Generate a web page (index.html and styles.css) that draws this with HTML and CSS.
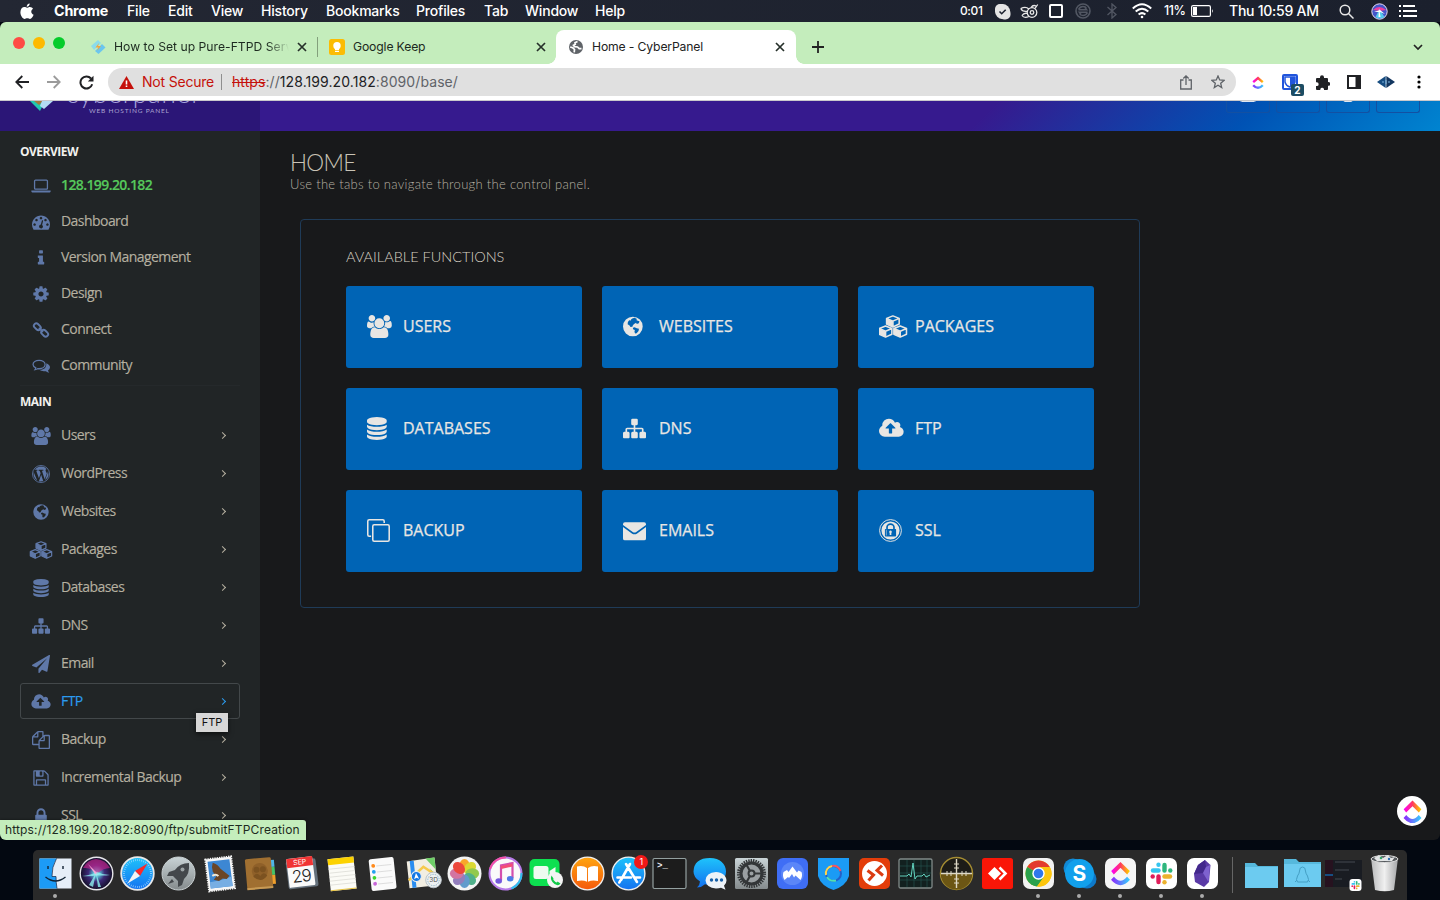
FILE: index.html
```html
<!DOCTYPE html>
<html lang="en">
<head>
<meta charset="utf-8">
<title>Home - CyberPanel</title>
<link rel="stylesheet" href="styles.css">
</head>
<body>
<svg class="defs" width="0" height="0">
<defs>
<path id="laptop" d="M416 1280q-66 0-113-47t-47-113v-704q0-66 47-113t113-47h1088q66 0 113 47t47 113v704q0 66-47 113t-113 47h-1088zm-32-864v704q0 13 9.500 22.500t22.500 9.500h1088q13 0 22.500-9.500t9.500-22.500v-704q0-13-9.500-22.500t-22.500-9.500h-1088q-13 0-22.500 9.500t-9.500 22.500zm1376 928h160v96q0 40-47 68t-113 28h-1600q-66 0-113-28t-47-68v-96h1760z"/>
<path id="gauge" d="M384 1152q0-53-37.500-90.500t-90.500-37.500-90.500 37.500-37.500 90.500 37.500 90.500 90.500 37.500 90.500-37.500 37.500-90.500zm192-448q0-53-37.500-90.500t-90.500-37.500-90.500 37.500-37.500 90.500 37.500 90.500 90.500 37.500 90.500-37.500 37.500-90.500zm428 481l101-382q6-26-7.500-48.500t-38.500-29.500-48 6.500-30 39.500l-101 382q-60 5-107 43.500t-63 98.500q-20 77 20 146t117 89 146-20 89-117q16-60-6-117t-72-91zm660-33q0-53-37.500-90.500t-90.500-37.500-90.500 37.500-37.500 90.500 37.500 90.500 90.500 37.500 90.500-37.500 37.500-90.500zm-640-640q0-53-37.500-90.500t-90.500-37.500-90.500 37.500-37.500 90.500 37.500 90.500 90.500 37.500 90.500-37.500 37.500-90.500zm448 192q0-53-37.500-90.500t-90.500-37.500-90.500 37.500-37.500 90.500 37.500 90.500 90.500 37.500 90.500-37.500 37.500-90.500zm320 448q0 261-141 483-19 29-54 29h-1402q-35 0-54-29-141-221-141-483 0-182 71-348t191-286 286-191 348-71 348 71 286 191 191 286 71 348z"/>
<path id="info" d="M1216 1344v128q0 26-19 45t-45 19h-512q-26 0-45-19t-19-45v-128q0-26 19-45t45-19h64v-384h-64q-26 0-45-19t-19-45v-128q0-26 19-45t45-19h384q26 0 45 19t19 45v576h64q26 0 45 19t19 45zm-128-1152v192q0 26-19 45t-45 19h-256q-26 0-45-19t-19-45v-192q0-26 19-45t45-19h256q26 0 45 19t19 45z"/>
<path id="cog" d="M1152 896q0-106-75-181t-181-75-181 75-75 181 75 181 181 75 181-75 75-181zm512-109v222q0 12-8 23t-20 13l-185 28q-19 54-39 91 35 50 107 138 10 12 10 25t-9 23q-27 37-99 108t-94 71q-12 0-26-9l-138-108q-44 23-91 38-16 136-29 186-7 28-36 28h-222q-14 0-24.500-8.500t-11.500-21.500l-28-184q-49-16-90-37l-141 107q-10 9-25 9-14 0-25-11-126-114-165-168-7-10-7-23 0-12 8-23 15-21 51-66.500t54-70.500q-27-50-41-99l-183-27q-13-2-21-12.500t-8-23.500v-222q0-12 8-23t19-13l186-28q14-46 39-92-40-57-107-138-10-12-10-24 0-10 9-23 26-36 98.500-107.500t94.500-71.500q13 0 26 10l138 107q44-23 91-38 16-136 29-186 7-28 36-28h222q14 0 24.500 8.500t11.500 21.500l28 184q49 16 90 37l142-107q9-9 24-9 13 0 25 10 129 119 165 170 7 8 7 22 0 12-8 23-15 21-51 66.500t-54 70.500q26 50 41 98l183 28q13 2 21 12.500t8 23.500z"/>
<g id="chain" fill="none" stroke="currentColor" stroke-width="190"><rect x="150" y="330" width="760" height="480" rx="230" transform="rotate(45 530 570)"/><rect x="880" y="980" width="760" height="480" rx="230" transform="rotate(45 1260 1220)"/><path d="M740 740l300 300" stroke-linecap="round"/></g>
<g id="comments"><path d="M704 330c330 0 600 170 600 420s-270 420-600 420q-70 0-140-12q-110 90-260 110q60-80 75-180c-170-80-275-200-275-338c0-250 270-420 600-420z" fill="none" stroke="currentColor" stroke-width="125"/><path d="M1420 610c220 70 372 230 372 410q0 190-200 320q20 110 130 220q-190-20-340-150q-400 70-660-130c370 20 750-180 698-670z"/></g>
<path id="users" d="M593 896q-162 5-265 128h-134q-82 0-138-40.500t-56-118.500q0-353 124-353 6 0 43.500 21t97.500 42.500 119 21.500q67 0 133-23-5 37-5 66 0 159 93 293zm1071 637q0 120-73 189.500t-194 69.500h-874q-121 0-194-69.500t-73-189.500q0-53 3.500-103.500t14-109 26.500-108.500 43-97.500 62-81 85.500-53.500 111.500-20q10 0 43 21.500t73 48 107 48 135 21.500 135-21.500 107-48 73-48 43-21.500q61 0 111.500 20t85.500 53.500 62 81 43 97.500 26.500 108.500 14 109 3.500 103.500zm-1024-1277q0 106-75 181t-181 75-181-75-75-181 75-181 181-75 181 75 75 181zm704 384q0 159-112.500 271.500t-271.500 112.500-271.500-112.500-112.500-271.500 112.500-271.500 271.500-112.500 271.500 112.500 112.500 271.500zm576 225q0 78-56 118.500t-138 40.500h-134q-103-123-265-128 93-134 93-293 0-29-5-66 66 23 133 23 59 0 119-21.500t97.500-42.500 43.500-21q124 0 124 353zm-128-609q0 106-75 181t-181 75-181-75-75-181 75-181 181-75 181 75 75 181z"/>
<g id="wordpress"><circle cx="896" cy="896" r="850" fill="none" stroke="currentColor" stroke-width="80"/><path d="M250 520Q500 150 896 150Q1250 150 1450 390Q1330 420 1350 560L1480 850L1260 1420L990 560H1130V480H660V560H760L860 830L690 1330L420 560H530V480H300ZM160 690L520 1540Q110 1300 160 690ZM910 980L1120 1600Q900 1670 690 1610ZM1560 620Q1810 1170 1300 1520L1520 900Q1580 740 1560 620Z"/></g>
<path id="globe" fill-rule="evenodd" d="M896 128a768 768 0 1 1 0 1536a768 768 0 1 1 0-1536zM850 270l180-50 190 90-60 80 120 50 130 40-50 160-160 60-50-90-160 90-90 90-40 120-150 30-70-130-150-80 20-190 100-130 130 20 30-100zM900 990l130-40 170 90 170 30-30 180-150 170-110 30-60-130 30-150-140-60z"/>
<g id="cubes" stroke="currentColor" stroke-width="120" stroke-linejoin="round" fill="none"><g id="cube"><path d="M1152 70l490 195v440l-490 225-490-225V265zM662 265l490 210 490-210M1152 475v440"/><path fill="currentColor" stroke-width="40" d="M662 285l490 210v420l-490-225z"/></g><use href="#cube" x="-570" y="790"/><use href="#cube" x="570" y="790"/></g>
<path id="database" d="M896 768q237 0 443-43t325-127v170q0 69-103 128t-280 93.500-385 34.500-385-34.500-280-93.500-103-128v-170q119 84 325 127t443 43zm0 768q237 0 443-43t325-127v170q0 69-103 128t-280 93.500-385 34.500-385-34.500-280-93.500-103-128v-170q119 84 325 127t443 43zm0-384q237 0 443-43t325-127v170q0 69-103 128t-280 93.500-385 34.500-385-34.500-280-93.500-103-128v-170q119 84 325 127t443 43zm0-1152q208 0 385 34.500t280 93.500 103 128v128q0 69-103 128t-280 93.500-385 34.500-385-34.500-280-93.500-103-128v-128q0-69 103-128t280-93.500 385-34.500z"/>
<path id="sitemap" d="M1792 1248v320q0 40-28 68t-68 28h-320q-40 0-68-28t-28-68v-320q0-40 28-68t68-28h96v-192h-512v192h96q40 0 68 28t28 68v320q0 40-28 68t-68 28h-320q-40 0-68-28t-28-68v-320q0-40 28-68t68-28h96v-192h-512v192h96q40 0 68 28t28 68v320q0 40-28 68t-68 28h-320q-40 0-68-28t-28-68v-320q0-40 28-68t68-28h96v-192q0-52 38-90t90-38h512v-192h-96q-40 0-68-28t-28-68v-320q0-40 28-68t68-28h320q40 0 68 28t28 68v320q0 40-28 68t-68 28h-96v192h512q52 0 90 38t38 90v192h96q40 0 68 28t28 68z"/>
<path id="plane" d="M1764 11q33 24 27 64l-256 1536q-5 29-32 45-14 8-31 8-11 0-24-5l-453-185-242 295q-18 23-49 23-13 0-22-4-19-7-30.500-23.500t-11.500-36.500v-349l864-1059-1069 925-395-162q-37-14-40-55-2-40 32-59l1664-960q15-9 32-9 20 0 36 11z"/>
<path id="cloud" d="M1280 864q0-14-9-23l-352-352q-9-9-23-9t-23 9l-351 351q-10 12-10 24 0 14 9 23t23 9h224v352q0 13 9.500 22.500t22.500 9.500h192q13 0 22.500-9.500t9.500-22.500v-352h224q13 0 22.500-9.500t9.500-22.500zm640 288q0 159-112.500 271.500t-271.500 112.500h-1088q-185 0-316.500-131.500t-131.500-316.500q0-130 70-240t188-165q-2-30-2-43 0-212 150-362t362-150q156 0 285.500 87t188.500 231q71-62 166-62 106 0 181 75t75 181q0 76-41 138 130 31 213.500 135.500t83.500 238.500z"/>
<path id="files" d="M1696 384q40 0 68 28t28 68v1216q0 40-28 68t-68 28h-960q-40 0-68-28t-28-68v-288h-544q-40 0-68-28t-28-68v-672q0-40 20-88t48-76l408-408q28-28 76-48t88-20h416q40 0 68 28t28 68v328q68-40 128-40h416zm-544 213l-299 299h299v-299zm-640-384l-299 299h299v-299zm196 647l316-316v-416h-384v416q0 40-28 68t-68 28h-416v640h512v-256q0-40 20-88t48-76zm956 804v-1152h-384v416q0 40-28 68t-68 28h-416v640h896z"/>
<path id="floppy" d="M512 1536h768v-384h-768v384zm896 0h128v-896q0-14-10-38.500t-20-34.500l-281-281q-10-10-34-20t-39-10v416q0 40-28 68t-68 28h-576q-40 0-68-28t-28-68v-416h-128v1280h128v-416q0-40 28-68t68-28h832q40 0 68 28t28 68v416zm-384-928v-320q0-13-9.500-22.500t-22.500-9.500h-192q-13 0-22.500 9.500t-9.500 22.500v320q0 13 9.500 22.500t22.500 9.500h192q13 0 22.500-9.500t9.500-22.500zm640 32v928q0 40-28 68t-68 28h-1344q-40 0-68-28t-28-68v-1344q0-40 28-68t68-28h928q40 0 88 20t76 48l280 280q28 28 48 76t20 88z"/>
<path id="lock" d="M640 768h512v-192q0-106-75-181t-181-75-181 75-75 181v192zm832 96v576q0 40-28 68t-68 28h-960q-40 0-68-28t-28-68v-576q0-40 28-68t68-28h32v-192q0-184 132-316t316-132 316 132 132 316v192h32q40 0 68 28t28 68z"/>
<path id="envelope" d="M0 620l690 500q206 140 412 0l690-500v894q0 150-150 150H150Q0 1664 0 1514zM150 256h1492q150 0 150 150v60l-760 550q-136 90-272 0L0 466v-60q0-150 150-150z"/>
<g id="clone" fill="none" stroke="currentColor" stroke-width="120"><rect x="450" y="450" width="1280" height="1280" rx="110"/><path d="M320 1340H170q-110 0-110-110V170Q60 60 170 60h1060q110 0 110 110v150"/></g>
<g id="expeditedssl"><circle cx="896" cy="896" r="850" fill="none" stroke="currentColor" stroke-width="75"/><path fill-rule="evenodd" d="M896 190a706 706 0 1 1 0 1412a706 706 0 1 1 0-1412zM500 770h60v-120a336 320 0 0 1 672 0v120h60q40 0 40 40v500q0 60-60 60H520q-60 0-60-60V810q0-40 40-40zM690 770h412v-120a206 190 0 0 0-412 0zM540 830v460h40V830zM896 890a110 110 0 0 1 65 195v165h-130v-165a110 110 0 0 1 65-195z"/></g>
<g id="x" stroke="#26302a" stroke-width="1.700" fill="none"><path d="M1 1l8 8M9 1l-8 8"/></g>
<linearGradient id="cuTop"><stop offset="0" stop-color="#ff02f0"/><stop offset=".5" stop-color="#ff3a5e"/><stop offset="1" stop-color="#ffc800"/></linearGradient>
<linearGradient id="cuBot"><stop offset="0" stop-color="#8930fd"/><stop offset="1" stop-color="#38c6fc"/></linearGradient>
<g id="clickup" fill="none" stroke-width="4"><path d="M2 10l8-7 8 7" stroke="url(#cuTop)"/><path d="M2 15q8 8.500 16 0" stroke="url(#cuBot)"/></g>
<g id="slack" stroke-width="4.400" stroke-linecap="round" fill="none"><path d="M3 8.500h5.500" stroke="#36c5f0"/><path d="M8.500 2.700h0" stroke="#36c5f0"/><path d="M14.500 3v5.500" stroke="#2eb67d"/><path d="M20.300 8.500h0" stroke="#2eb67d"/><path d="M14.500 14.500H20" stroke="#ecb22e"/><path d="M14.500 20.300h0" stroke="#ecb22e"/><path d="M8.500 14.500V20" stroke="#e01e5a"/><path d="M2.700 14.500h0" stroke="#e01e5a"/></g>
<radialGradient id="siri"><stop offset="0" stop-color="#fff"/><stop offset=".2" stop-color="#58b5cf"/><stop offset=".5" stop-color="#3d2a78"/><stop offset="1" stop-color="#130e26"/></radialGradient>
<linearGradient id="blueV" x2="0" y2="1"><stop offset="0" stop-color="#1ec3fb"/><stop offset="1" stop-color="#1472f0"/></linearGradient>
<linearGradient id="greyV" x2="0" y2="1"><stop offset="0" stop-color="#c9d3d6"/><stop offset="1" stop-color="#858b8d"/></linearGradient>
<linearGradient id="orV" x2="0" y2="1"><stop offset="0" stop-color="#ffa510"/><stop offset="1" stop-color="#f5590b"/></linearGradient>
<linearGradient id="binG"><stop offset="0" stop-color="#b9babb"/><stop offset=".5" stop-color="#f0f0f0"/><stop offset="1" stop-color="#a5a6a8"/></linearGradient>
</defs>
</svg>

<header class="menubar">
  <nav class="menus">
    <svg class="apple" viewBox="0 0 14 17" width="14" height="17"><path fill="#fff" d="M9.700.4c.1 1.700-1.400 3.400-3 3.300C6.500 2.100 8 .6 9.700.4zM7 4.800c.8 0 1.600-.8 2.900-.8 1.400 0 2.500.8 3.100 1.700-2.500 1.500-2.200 4.900.6 6-.7 1.900-2.100 4.200-3.600 4.200-1 0-1.500-.6-2.700-.6s-1.800.6-2.700.6C2.700 15.900.4 12.600.4 9.300.4 5.900 2.400 4.100 4.400 4.100 5.600 4.100 6.400 4.800 7 4.800z"/></svg>
    <b>Chrome</b><span>File</span><span>Edit</span><span>View</span><span>History</span><span>Bookmarks</span><span>Profiles</span><span>Tab</span><span>Window</span><span>Help</span>
  </nav>
  <div class="tray">
    <span class="timer">0:01</span>
    <svg width="17" height="17" viewBox="0 0 17 17"><rect x="1" y="1" width="11" height="11" rx="5" fill="#e5e5e5"/><rect x="5" y="5" width="11.500" height="11.500" rx="5" fill="#e5e5e5"/><circle cx="8.500" cy="8.500" r="7.500" fill="#e5e5e5"/><path d="M5.500 8.500l2.200 2.200 4-4" stroke="#1e2330" stroke-width="1.600" fill="none"/></svg>
    <svg width="19" height="15" viewBox="0 0 19 15" fill="none" stroke="#e8e8e8" stroke-width="1.300"><circle cx="12" cy="8.500" r="4.800"/><circle cx="12" cy="8.500" r="1.800"/><path d="M.8 4.500q5-2.500 8 .5M.8 4.500q1.500 3.500 6.500 2.800M2 11.500q2-3 5.500-2M2 11.500q2 3 7 1M15 4.500l2.700-4M11 3.500q2-3 5-1.500"/></svg>
    <svg width="14" height="14" viewBox="0 0 14 14"><rect x="1" y="1" width="12" height="12" rx="1" fill="none" stroke="#fff" stroke-width="2"/></svg>
    <svg width="16" height="16" viewBox="0 0 16 16" fill="none" stroke="#525763" stroke-width="1.600"><circle cx="8" cy="8" r="7"/><path d="M3.500 6.500q1.500-3 4.500-3 2.500 0 3.500 2M12.500 9.500q-1.500 3-4.500 3-2.500 0-3.500-2M3.500 6.800h8l-1.500-1.500M12.500 9.200h-8L6 10.700"/></svg>
    <svg width="12" height="16" viewBox="0 0 12 16" fill="none" stroke="#525763" stroke-width="1.300"><path d="M1.500 4l8.500 7.500L6 15V1l4 3.500L1.500 12"/></svg>
    <svg width="20" height="16" viewBox="0 0 20 16" fill="none" stroke="#fff" stroke-width="2"><path d="M.8 5.500q9.200-8.500 18.400 0M3.700 8.600q6.300-5.800 12.600 0M6.600 11.600q3.400-3 6.800 0"/><circle cx="10" cy="14" r="1.300" fill="#fff" stroke="none"/></svg>
    <span class="pct">11%</span>
    <svg width="23" height="12" viewBox="0 0 23 12"><rect x=".6" y=".6" width="18.800" height="10.800" rx="1.500" fill="none" stroke="#fff" stroke-width="1.200"/><rect x="2" y="2" width="4" height="8" fill="#fff"/><path d="M21 4q1.800 2 0 4z" fill="#fff"/></svg>
    <span class="clock">Thu 10:59 AM</span>
    <svg width="15" height="15" viewBox="0 0 15 15" fill="none" stroke="#e8e8e8" stroke-width="1.500"><circle cx="6" cy="6" r="4.800"/><path d="M9.500 9.500l5 5"/></svg>
    <svg width="17" height="17" viewBox="0 0 17 17"><circle cx="8.500" cy="8.500" r="7.700" fill="#4456c9" stroke="#e7d9ef"/><path d="M2 7q6-6 13 0l-6 1z" fill="#ec3d9f"/><path d="M8.500 6l5 8q-5 3-9 0z" fill="#54c9ec"/><path d="M8 5l1.500 9-2 0zM3 9l6-2 5 4-5-2z" fill="#fff"/></svg>
    <svg width="18" height="12" viewBox="0 0 18 12" fill="#fff"><path d="M0 0h2v2H0zM0 5h2v2H0zM0 10h2v2H0zM4 0h12v2H4zM4 5h14v2H4zM4 10h14v2H4z"/></svg>
  </div>
</header>

<main class="window">
  <div class="tabstrip">
    <div class="lights"><i class="red"></i><i class="amber"></i><i class="green"></i></div>
    <div class="tab first">
      <svg width="16" height="16" viewBox="0 0 16 16"><path d="M1 7l7-6 3 3-7 7z" fill="#8bdcea"/><path d="M5 12l7-7 3.500 3.500-7 6.500z" fill="#6bc6ee"/><path d="M9 4L5.500 8.500h3L7 12l4-5H8z" fill="#f3a53c"/></svg>
      <span class="title fade">How to Set up Pure-FTPD Serv</span>
      <svg class="close" width="10" height="10"><use href="#x"/></svg>
    </div>
    <div class="tab second">
      <svg width="16" height="16" viewBox="0 0 16 16"><rect width="16" height="16" rx="2.500" fill="#fbbc04"/><circle cx="8" cy="6.800" r="3.700" fill="#fff"/><path d="M6 9h4v2H6zM6 11.800h4v1.200H6z" fill="#fff"/></svg>
      <span class="title">Google Keep</span>
      <svg class="close" width="10" height="10"><use href="#x"/></svg>
    </div>
    <div class="tab active">
      <svg width="14" height="14" viewBox="0 0 14 14"><circle cx="7" cy="7" r="7" fill="#5f6368"/><path d="M8.500 1.500l-2.500 1.200 .3 1.600-1.800 1 1 1.300 3 .4 1.700 1.700h2.300M1.200 7l2.600.8 1.700 1.700-.3 2.800" fill="none" stroke="#fff" stroke-width="1.700"/></svg>
      <span class="title">Home - CyberPanel</span>
      <svg class="close" width="10" height="10"><use href="#x"/></svg>
    </div>
    <svg class="plus" width="12" height="12" viewBox="0 0 12 12"><path d="M6 0v12M0 6h12" stroke="#222" stroke-width="1.800"/></svg>
    <svg class="caret" width="10" height="7" viewBox="0 0 10 7"><path d="M1 1l4 4 4-4" fill="none" stroke="#222" stroke-width="1.700"/></svg>
  </div>

  <div class="toolbar">
    <svg width="14" height="14" viewBox="0 0 14 14" fill="none" stroke="#202124" stroke-width="1.800"><path d="M14 7H1.500M7.300 1L1.300 7l6 6"/></svg>
    <svg width="14" height="14" viewBox="0 0 14 14" fill="none" stroke="#9b9b9b" stroke-width="1.800"><path d="M0 7h12.500M6.700 1l6 6-6 6"/></svg>
    <svg width="15" height="15" viewBox="0 0 15 15" fill="none" stroke="#202124" stroke-width="2"><path d="M13.200 9.300A6 6 0 1 1 12 3.500"/><path d="M14.500.8v5.700H8.800z" fill="#202124" stroke="none"/></svg>
    <div class="omnibox">
      <svg width="15" height="13" viewBox="0 0 15 13"><path d="M7.500 0L15 13H0z" fill="#c5110b"/><path d="M6.700 4.500h1.600v4H6.700zM6.700 9.600h1.600v1.500H6.700z" fill="#fff"/></svg>
      <span class="notsecure">Not Secure</span>
      <span class="url"><s>https</s>://<em>128.199.20.182</em>:8090/base/</span>
      <svg class="share" width="12" height="15" viewBox="0 0 12 15" fill="none" stroke="#5f6368" stroke-width="1.300"><path d="M3.500 5H.7v9h10.600V5H8.500M6 10V1M3.300 3.500L6 .9l2.700 2.600"/></svg>
      <svg width="14" height="14" viewBox="0 0 14 14" fill="none" stroke="#5f6368" stroke-width="1.300"><path d="M7 1l1.700 4 4.300.4-3.300 2.900 1 4.200L7 10.200l-3.700 2.300 1-4.200L1 5.400 5.300 5z"/></svg>
    </div>
    <div class="exts">
      <svg width="12" height="13" viewBox="0 0 20 21"><use href="#clickup"/></svg>
      <span class="bitwarden"><svg width="16" height="16" viewBox="0 0 16 16"><rect x="1" y="1" width="14" height="14" rx="1" fill="#fff" stroke="#2155dc" stroke-width="2"/><path d="M3 3h10v5q-1 4-5 5-4-1-5-5z" fill="#fff" stroke="#2155dc" stroke-width="1.500"/><path d="M8 3h5v5q-1 4-5 5z" fill="#2155dc"/></svg><b>2</b></span>
      <svg width="15" height="15" viewBox="0 0 15 15"><path fill="#202124" d="M1 4q0-1 1-1h3V2.200a2 2 0 0 1 4 0V3h3q1 0 1 1v3h.3a1.900 1.900 0 0 1 0 3.800H13V14q0 1-1 1H9v-.8a1.900 1.900 0 0 0-3.700 0v.8H2q-1 0-1-1v-3h.8a1.800 1.800 0 0 0 0-3.700H1z"/></svg>
      <svg width="14" height="14" viewBox="0 0 14 14"><path d="M0 0h14v14H0zM2 2v10h6.500V2z" fill="#202124" fill-rule="evenodd"/></svg>
      <svg width="18" height="12" viewBox="0 0 18 12"><path d="M8.700 0v12L0 6z" fill="#164d81"/><path d="M9.300 0v12L18 6z" fill="#12365f"/><path d="M6 5v2M12 5v2M9 4v4" stroke="#7ab4df"/></svg>
      <svg width="4" height="14" viewBox="0 0 4 14"><circle cx="2" cy="2" r="1.600"/><circle cx="2" cy="7" r="1.600"/><circle cx="2" cy="12" r="1.600"/></svg>
    </div>
  </div>

  <div class="pagehead">
    <div class="brand">
      <svg width="24" height="12" viewBox="0 0 24 12"><path d="M1 0h15l-5 10z" fill="#21c9b0"/><path d="M5 0h9l-4 4z" fill="#a47b3e"/><path d="M13 0h11l-9 8-4-3z" fill="#b3dcf4"/></svg>
      <div class="words"><span class="name">cyberpanel</span><span class="sub">WEB HOSTING PANEL</span></div>
    </div>
    <div class="bar"><i class="a"></i><i></i><i class="c"></i><i></i></div>
  </div>

  <div class="page">
    <aside class="sidebar">
      <h6>OVERVIEW</h6>
      <ul class="overview">
        <li class="ip"><svg viewBox="0 0 1920 1792"><use href="#laptop"/></svg><span>128.199.20.182</span></li>
        <li><svg viewBox="0 0 1792 1792"><use href="#gauge"/></svg><span>Dashboard</span></li>
        <li><svg viewBox="0 0 1792 1792"><use href="#info"/></svg><span>Version Management</span></li>
        <li><svg viewBox="0 0 1792 1792"><use href="#cog"/></svg><span>Design</span></li>
        <li><svg viewBox="0 0 1792 1792"><use href="#chain"/></svg><span>Connect</span></li>
        <li><svg viewBox="0 0 1792 1792"><use href="#comments"/></svg><span>Community</span></li>
      </ul>
      <hr>
      <h6>MAIN</h6>
      <ul class="mainnav">
        <li><svg viewBox="0 0 1920 1792"><use href="#users"/></svg><span>Users</span><i></i></li>
        <li><svg viewBox="0 0 1792 1792"><use href="#wordpress"/></svg><span>WordPress</span><i></i></li>
        <li><svg viewBox="0 0 1792 1792"><use href="#globe"/></svg><span>Websites</span><i></i></li>
        <li><svg viewBox="0 0 2304 1792"><use href="#cubes"/></svg><span>Packages</span><i></i></li>
        <li><svg viewBox="128 0 1536 1792"><use href="#database"/></svg><span>Databases</span><i></i></li>
        <li><svg viewBox="0 0 1792 1792"><use href="#sitemap"/></svg><span>DNS</span><i></i></li>
        <li><svg viewBox="0 0 1792 1792"><use href="#plane"/></svg><span>Email</span><i></i></li>
        <li class="hover"><svg viewBox="0 0 1920 1792"><use href="#cloud"/></svg><span>FTP</span><i></i></li>
        <li><svg viewBox="0 0 1792 1792"><use href="#files"/></svg><span>Backup</span><i></i></li>
        <li><svg viewBox="0 0 1792 1792"><use href="#floppy"/></svg><span>Incremental Backup</span><i></i></li>
        <li><svg viewBox="0 0 1792 1792"><use href="#lock"/></svg><span>SSL</span><i></i></li>
      </ul>
    </aside>
    <section class="content">
      <h2>HOME</h2>
      <p>Use the tabs to navigate through the control panel.</p>
      <div class="panel">
        <h3>AVAILABLE FUNCTIONS</h3>
        <div class="tiles">
          <a><svg viewBox="0 0 1920 1792" preserveAspectRatio="xMinYMid"><use href="#users"/></svg>USERS</a>
          <a><svg viewBox="128 0 1536 1792" preserveAspectRatio="xMinYMid"><use href="#globe"/></svg>WEBSITES</a>
          <a><svg viewBox="70 0 2304 1792" preserveAspectRatio="xMinYMid"><use href="#cubes"/></svg>PACKAGES</a>
          <a><svg viewBox="128 0 1536 1792" preserveAspectRatio="xMinYMid"><use href="#database"/></svg>DATABASES</a>
          <a><svg viewBox="0 0 1792 1792" preserveAspectRatio="xMinYMid"><use href="#sitemap"/></svg>DNS</a>
          <a><svg viewBox="0 0 1920 1792" preserveAspectRatio="xMinYMid"><use href="#cloud"/></svg>FTP</a>
          <a><svg viewBox="0 0 1792 1792" preserveAspectRatio="xMinYMid"><use href="#clone"/></svg>BACKUP</a>
          <a><svg viewBox="0 0 1792 1792" preserveAspectRatio="xMinYMid"><use href="#envelope"/></svg>EMAILS</a>
          <a><svg viewBox="0 0 1792 1792" preserveAspectRatio="xMinYMid"><use href="#expeditedssl"/></svg>SSL</a>
        </div>
      </div>
    </section>
  </div>
  <div class="tooltip">FTP</div>
  <div class="status">https://128.199.20.182:8090/ftp/submitFTPCreation</div>
  <div class="fab"><svg width="19" height="23" viewBox="0 0 20 21" preserveAspectRatio="none"><use href="#clickup"/></svg></div>
</main>

<footer class="dock">
  <span class="app run"><svg viewBox="0 0 41 41"><path d="M4.500 5.500h32v30h-32z" fill="#e6eef8"/><path d="M4.500 5.500h17q-5 9-4.500 18h4q0 6 1 12H4.500z" fill="#1c9bf6"/><path d="M13 13v3M28 13v3M10.500 24q10 8 20 0" stroke="#123" stroke-width="1.400" fill="none"/><path d="M21.500 5.500q-5 9-4.500 18h4q0 6 1 12" stroke="#124" fill="none" stroke-width=".7"/></svg></span>
  <span class="app"><svg viewBox="0 0 41 41"><circle cx="20.500" cy="20.500" r="16.300" fill="url(#siri)" stroke="#e6e6ea" stroke-width="1.400"/><path d="M7 15q4-8 13-9 10 1 14 9-7 0-13 6-5-7-14-6z" fill="#c9238d" opacity=".65"/><path d="M6 23q9-1 15-4 6 3 13 3-8 1-13 0-6 2-15 1zM20 20l5 14-3 0zM20 20l-7 12 4 2z" fill="#8df0f0" opacity=".8"/><path d="M12 11l9 9-2 1z" fill="#f6a5d8"/></svg></span>
  <span class="app"><svg viewBox="0 0 41 41"><circle cx="20.500" cy="20.500" r="16.300" fill="url(#blueV)" stroke="#e8e8e8" stroke-width="1.800"/><circle cx="20.500" cy="20.500" r="13.500" fill="none" stroke="#a9dcff" stroke-width="2" stroke-dasharray=".6 1.500"/><path d="M30.500 10.500L18 18l5 5z" fill="#fa2a2a"/><path d="M10.500 30.500L18 18l5 5z" fill="#f4f4f4"/></svg></span>
  <span class="app"><svg viewBox="0 0 41 41"><circle cx="20.500" cy="20.500" r="16.500" fill="url(#greyV)" stroke="#c9d0d2"/><path d="M31 10q-9 0-14 7l-6 2-2 4 6 0 5 5v6l4-2 2-6q6-5 5-16zM14 26l-4 5 6-2z" fill="#43474b"/><circle cx="24.500" cy="16.500" r="2" fill="#9ba2a4"/></svg></span>
  <span class="app"><svg viewBox="0 0 41 41"><g transform="rotate(-7 20 20)"><rect x="8" y="5" width="26" height="32" fill="#f6f6f6" stroke="#f6f6f6" stroke-width="2" stroke-dasharray="1.300 1"/><path d="M10 7.500h22v27H10z" fill="#3d87d3"/><path d="M10 28q10 0 22-3v9.500H10z" fill="#77aee3"/><path d="M15 9q5 2 7 7l8 8-3 3-4-1-4 2-5-2 3-3-3-5q-1-5 1-9z" fill="#6b4526"/><path d="M13 22q4-2 6 1" stroke="#f0e7d5" stroke-width="2" fill="none"/></g></svg></span>
  <span class="app"><svg viewBox="0 0 41 41"><g transform="rotate(-5 20 20)"><path d="M31 8h4v7h-4z" fill="#4fb6e7"/><path d="M31 15h4v8h-4z" fill="#45c368"/><path d="M31 23h4v9h-4z" fill="#f0a02c"/><rect x="6" y="5" width="26" height="31" rx="1.500" fill="#a06f31"/><path d="M6 34h26v2H6z" fill="#c79a55"/><g fill="#7c5220"><path d="M12 18a8 8 0 0 1 16 0 8 8 0 0 1-16 0z" fill="#8f6029"/><circle cx="16.800" cy="16.500" r="3"/><circle cx="23.200" cy="16.500" r="3"/><path d="M13 23q3.500-5 7 0 3.500-5 7 0-3.500 4-7 4t-7-4z"/></g></g></svg></span>
  <span class="app"><svg viewBox="0 0 41 41"><g transform="rotate(-7 20 20)"><rect x="6" y="7" width="30" height="28" rx="2" fill="#64707b"/><rect x="7" y="4.500" width="26" height="29" rx="1" fill="#fafafa"/><path d="M7 4.500h26v9H7z" fill="#f03434"/><text x="20" y="11.500" class="cal-m">SEP</text><text x="20" y="29" class="cal-d">29</text></g></svg></span>
  <span class="app"><svg viewBox="0 0 41 41"><g transform="rotate(-6 20 20)"><rect x="8" y="5" width="26" height="32" fill="#fbfbf6"/><path d="M8 5h26v6H8z" fill="#fcd200"/><path d="M8 15h26M8 19h26M8 23h26M8 27h26M8 31h26" stroke="#deded8" stroke-width=".8"/><path d="M8 36.500h26" stroke="#e7c23d"/></g></svg></span>
  <span class="app"><svg viewBox="0 0 41 41"><g transform="rotate(-6 20 20)"><rect x="8" y="5" width="25" height="32" rx="2" fill="#fafafa"/><path d="M15 12.500h15M15 18.500h15M15 24.500h15M15 30.500h15" stroke="#ddd"/><circle cx="12" cy="12" r="1.900" fill="#ff8a1b"/><circle cx="12" cy="18" r="1.900" fill="#24a0ef"/><circle cx="12" cy="24" r="1.900" fill="#3cd62e"/><circle cx="12" cy="30" r="1.900" fill="#c766d8"/></g></svg></span>
  <span class="app"><svg viewBox="0 0 41 41"><g transform="rotate(-6 18 20)"><path d="M5 7l28-1v28H5z" fill="#f2eee2"/><path d="M16 6h8l9 12v-12zM27 16l6 8v6z" fill="#6fce68"/><path d="M8 7h4v27H8z" fill="#2a8df0"/><path d="M5 26l16-12 12 10" stroke="#f6c94c" stroke-width="2.500" fill="none"/><circle cx="13" cy="23" r="5" fill="#1478e4" stroke="#eee"/><path d="M13 19.500l2.500 6-2.500-1.200-2.500 1.200z" fill="#fff"/></g><circle cx="30.500" cy="27" r="7.800" fill="#eff1f2" stroke="#b9c3c9"/><circle cx="30.500" cy="27" r="5.700" fill="none" stroke="#91b6c7" stroke-dasharray="1.500 1"/><text x="30.500" y="29.300" class="m3d">3D</text></svg></span>
  <span class="app"><svg viewBox="0 0 41 41"><circle cx="20.500" cy="20.500" r="17" fill="#f4f4f4"/><g opacity=".92"><ellipse cx="20.500" cy="12.700" rx="5.200" ry="6.800" fill="#f9a01b"/><ellipse cx="20.500" cy="12.700" rx="5.200" ry="6.800" fill="#d8d723" transform="rotate(45 20.500 20.500)"/><ellipse cx="20.500" cy="12.700" rx="5.200" ry="6.800" fill="#8ac63f" transform="rotate(90 20.500 20.500)"/><ellipse cx="20.500" cy="12.700" rx="5.200" ry="6.800" fill="#42ab82" transform="rotate(135 20.500 20.500)"/><ellipse cx="20.500" cy="12.700" rx="5.200" ry="6.800" fill="#5594c9" transform="rotate(180 20.500 20.500)"/><ellipse cx="20.500" cy="12.700" rx="5.200" ry="6.800" fill="#8b75b8" transform="rotate(225 20.500 20.500)"/><ellipse cx="20.500" cy="12.700" rx="5.200" ry="6.800" fill="#d16a9b" transform="rotate(270 20.500 20.500)"/><ellipse cx="20.500" cy="12.700" rx="5.200" ry="6.800" fill="#ec3a2d" transform="rotate(315 20.500 20.500)"/></g></svg></span>
  <span class="app"><svg viewBox="0 0 41 41"><circle cx="20.500" cy="20.500" r="16" fill="#fafafa" stroke="#b77be8" stroke-width="2"/><path d="M5 16a16 16 0 0 1 16-11.500" stroke="#f34fa8" stroke-width="2" fill="none"/><path d="M36.500 20a16 16 0 0 1-10 15.500" stroke="#2fc0ee" stroke-width="2" fill="none"/><path d="M16 27.500v-15l11.500-2.500v15" stroke="#d34fae" stroke-width="2.200" fill="none"/><path d="M16 14.500l11.500-2.500" stroke="#f34f77" stroke-width="3"/><ellipse cx="13.700" cy="28" rx="3.300" ry="2.700" fill="#7558dd"/><ellipse cx="25.200" cy="25.700" rx="3.300" ry="2.700" fill="#4c7be6"/></svg></span>
  <span class="app"><svg viewBox="0 0 41 41"><rect x="3.500" y="6" width="30" height="27" rx="5" fill="#0de050"/><rect x="7.500" y="13" width="15" height="13" rx="2.500" fill="#eefbf0"/><path d="M23.500 18l6-4v11l-6-4z" fill="#eefbf0"/><circle cx="29" cy="27" r="8" fill="#f4f4f4"/><path d="M25.500 22.500l2 3q-1 1 2 3.500 1.500 1 2-.5l3 2q-2 3-6 .5-5-4-3-8.500z" fill="#11c948"/></svg></span>
  <span class="app"><svg viewBox="0 0 41 41"><circle cx="20.500" cy="20.500" r="16.400" fill="url(#orV)" stroke="#eee" stroke-width="1.400"/><path d="M20 15q-4-3-10-1.500V28q6-1.500 10 .8zM21 15q4-3 10-1.500V28q-6-1.500-10 .8z" fill="#fff"/></svg></span>
  <span class="app"><svg viewBox="0 0 41 41"><circle cx="20.500" cy="20.500" r="16.400" fill="url(#blueV)" stroke="#eee" stroke-width="1.400"/><path d="M22 11l-9 16M18 11l11 18M9.500 24.500H23M27 24.500h5M12.300 27.500l-1 2" stroke="#fff" stroke-width="2.600" stroke-linecap="round" fill="none"/></svg><b class="badge">1</b></span>
  <span class="app"><svg viewBox="0 0 41 41"><rect x="4" y="5.500" width="33" height="30" rx="1.500" fill="#1c1c1c" stroke="#93a0a0" stroke-width="1.200"/><text x="8" y="15" class="term">&gt;_</text></svg></span>
  <span class="app"><svg viewBox="0 0 41 41"><path d="M20 5c10 0 16 6 16 13.500S30 32 20 32q-3 0-5-.7-3 3-8 3.300 3-3 3-6Q3.500 24.500 3.500 18.500 4 5 20 5z" fill="url(#blueV)"/><path d="M26 19c6 0 10.500 4 10.500 8.500q0 3-2.500 5.200l1.500 4-4.500-2q-2 .8-5 .8-9.500-.5-10.500-8 .5-8 10.500-8.500z" fill="#eef3f8"/><g fill="#1860a8"><circle cx="21.500" cy="27" r="1.700"/><circle cx="26.500" cy="27" r="1.700"/><circle cx="31.500" cy="27" r="1.700"/></g></svg></span>
  <span class="app"><svg viewBox="0 0 41 41"><rect x="4" y="5" width="33" height="31" rx="1.500" fill="url(#greyV)"/><g fill="none" stroke="#333638"><circle cx="20.500" cy="20.500" r="13" fill="#9a9fa2" stroke-width="3" stroke-dasharray="1.400 1"/><circle cx="20.500" cy="20.500" r="10.500" stroke-width="3"/><circle cx="20.500" cy="20.500" r="3" stroke-width="2"/><path d="M23 20.500h8M19 18l-4-7M19 23l-4 7" stroke-width="2.200"/></g></svg></span>
  <span class="app"><svg viewBox="0 0 41 41"><rect x="5" y="5" width="31" height="31" rx="6" fill="#3f6ef5"/><circle cx="20.500" cy="20.500" r="11.500" fill="#5b86f8"/><path d="M12.500 27q-2.500-4-1-8l3.500-2 1.500 2 4-5.500 4.500 6 1.500-2 3 1.500q1.500 4-1 8l-5-4.500-1.500 2-2-3.500-3 4-1-1z" fill="#fff"/></svg></span>
  <span class="app"><svg viewBox="0 0 41 41"><path d="M5 5h31v18q-3 10-15.500 14Q8 33 5 23z" fill="#1b9bf5"/><g fill="none" stroke-width="2"><circle cx="20.500" cy="20.500" r="7.500" stroke="#2461c9"/><path d="M13 22a7.500 7.500 0 0 1 6-9" stroke="#ffd54c"/><path d="M19 13q6-1 8.500 5" stroke="#f15763"/><path d="M14 24q3 5 9 3.500" stroke="#53dfb4"/></g></svg></span>
  <span class="app"><svg viewBox="0 0 41 41"><rect x="5" y="5" width="31" height="31" rx="5" fill="#e33d0a"/><circle cx="20.500" cy="20.500" r="12.500" fill="#fff"/><path d="M13.500 17.500l6 4.500-5 5.500M28 12.500l-5 5 6 5" stroke="#db3c12" stroke-width="3" fill="none"/></svg></span>
  <span class="app"><svg viewBox="0 0 41 41"><rect x="4" y="6" width="33" height="29" rx="1.500" fill="#12201f" stroke="#818a89" stroke-width="1.300"/><path d="M5 13h31M5 20h31M5 27h31M12 7v27M19 7v27M26 7v27M32 7v27" stroke="#24514c" stroke-width=".7"/><path d="M5 23h7l2-2 2 3 2-14 2 16 2-3h5l2-2 2 3 4-2" stroke="#62d2be" fill="none"/></svg></span>
  <span class="app"><svg viewBox="0 0 41 41"><circle cx="20.500" cy="20.500" r="16" fill="#1d1c17" stroke="#a48c32" stroke-width="1.500"/><path d="M5 21h31a15.500 15.500 0 0 1-31 0z" fill="#6c5614"/><path d="M20.500 6v29M5 20.500h31" stroke="#ded9c7" stroke-width="1.400"/><path d="M18 11h5M18 15h5M18 26h5M18 30h5M11 18v5M15 18v5M26 18v5M30 18v5" stroke="#ded9c7"/></svg></span>
  <span class="app"><svg viewBox="0 0 41 41"><rect x="5" y="5" width="31" height="31" rx="2.500" fill="#fa1607"/><path d="M11 20.500l6.500-6.500 6.500 6.500-6.500 6.500z" fill="#fff"/><path d="M22.500 14.500l6 6-6 6" stroke="#fff" stroke-width="2.600" fill="none"/></svg></span>
  <span class="app run"><svg viewBox="0 0 41 41"><rect x="5" y="5" width="31" height="31" rx="7" fill="#f2f2f2"/><circle cx="20.500" cy="20.500" r="13" fill="#fdbf12"/><path d="M20.500 20.500L9.200 14a13 13 0 0 1 22.600 0z" fill="#e33b2e"/><path d="M20.500 20.500L9.200 14a13 13 0 0 0 9.800 19.500l7-9z" fill="#2aa14c"/><path d="M20.500 14h11.300a13 13 0 0 1-12.800 19.500l7-10z" fill="#fdc60d"/><circle cx="20.500" cy="20.500" r="6.200" fill="#fff"/><circle cx="20.500" cy="20.500" r="4.800" fill="#2f77ea"/></svg></span>
  <span class="app run"><svg viewBox="0 0 41 41"><circle cx="14" cy="15" r="9.500" fill="#1189d6"/><circle cx="28" cy="26" r="9.500" fill="#0e79c9"/><circle cx="20.500" cy="20.500" r="14.500" fill="#11a0ec"/><text x="20.500" y="28" class="sky">S</text></svg></span>
  <span class="app run"><svg viewBox="0 0 41 41"><rect x="5" y="5" width="31" height="31" rx="7" fill="#f5f5f5"/><use href="#clickup" transform="translate(10.500 8.500) scale(1 1.120)"/></svg></span>
  <span class="app run"><svg viewBox="0 0 41 41"><rect x="5" y="5" width="31" height="31" rx="7" fill="#fff"/><use href="#slack" x="9" y="9"/></svg></span>
  <span class="app run"><svg viewBox="0 0 41 41"><rect x="5" y="5" width="31" height="31" rx="7" fill="#fff"/><path d="M23 7l5.500 5-1.500 17-5 5-9-5-1-8 4-9z" fill="#5a3aa6"/><path d="M23 7l1 7-3 6-9 1 4-9z" fill="#43288c"/><path d="M24 14l4-2-1.500 17-5.500-9z" fill="#7e61cf"/></svg></span>
  <span class="sep"></span>
  <span class="app"><svg viewBox="0 0 41 41"><path d="M4 10h10l3 3h20v22H4z" fill="#56b8dc"/><path d="M4 14h33v21H4z" fill="#6ccbf0"/></svg></span>
  <span class="app"><svg viewBox="0 0 41 41"><path d="M2 6h12l3 3h22v25H2z" fill="#56b8dc"/><path d="M2 11h37v23H2z" fill="#6ccbf0"/><path d="M20.500 14q3 0 3 4 0 2 2 5 2 4 0 6h-10q-2-2 0-6 2-3 2-5 0-4 3-4zM15 27l-2 2M26 27l2 2" fill="none" stroke="#449fc4"/></svg></span>
  <span class="app"><svg viewBox="0 0 41 41"><path d="M2 7h37v27H2z" fill="#191c22"/><path d="M2 7h8v27H2z" fill="#26121f"/><path d="M2 22h8" stroke="#1263a3" stroke-width="1.500"/><path d="M12 9h20M12 17h14M12 26h7" stroke="#444950"/><rect x="26.500" y="26" width="12" height="12" rx="3" fill="#fff"/><use href="#slack" transform="translate(28.200 27.700) scale(.38)"/></svg></span>
  <span class="app"><svg viewBox="0 0 41 41"><path d="M7 5h27l-4 32q-9 2.500-19 0z" fill="url(#binG)"/><ellipse cx="20.500" cy="6" rx="13.500" ry="3.500" fill="#54585c" stroke="#dcdcdc"/><path d="M10 5l5-3 4 3 5-3 3 3 4-1-3 4H13z" fill="#e3e5e6"/><circle cx="17" cy="5" r="1.300" fill="#37a66c"/><circle cx="25" cy="6" r="1.200" fill="#2a6cb0"/></svg></span>
</footer>
</body>
</html>
```
FILE: styles.css
```css
* { box-sizing: border-box; }
body {
  margin: 0; width: 1440px; height: 900px; overflow: hidden;
  display: flex; flex-direction: column;
  background: #030811;
  font-family: Inter, "Liberation Sans", sans-serif;
}
.defs { position: absolute; }
ul, h2, h3, h6, p { margin: 0; padding: 0; }
svg { display: block; flex: none; }

.menubar {
  height: 22px; flex: none; display: flex; justify-content: space-between; align-items: center;
  background: linear-gradient(90deg, #232733, #1b202d);
  color: #fff; font-size: 14px; font-weight: 500; white-space: nowrap;
}
.menus {
  display: grid; grid-template-columns: 34px 73px 41px 43px 50px 65px 90px 68px 41px 70px 60px;
  align-items: center; padding-left: 20px; letter-spacing: -.2px;
}
.menus b, .menus span { padding-bottom: 2px; }
.menus b { font-weight: 700; font-size: 14.300px; letter-spacing: -.2px; }
.tray {
  display: grid; grid-template-columns: 29px 26px 28px 26px 28px 30px 30px 32px 26px 117px 28px 38px 20px;
  align-items: center; justify-items: center; width: 480px; line-height: 20px;
}
.tray span { justify-self: start; padding-bottom: 1px; }
.timer { font-size: 12px; letter-spacing: -.4px; }
.pct { font-size: 12.500px; padding-left: 7px; letter-spacing: -.4px; }
.clock { padding-left: 14px; letter-spacing: -.25px; }

.window {
  position: relative; height: 818px; flex: none; display: flex; flex-direction: column;
  border-radius: 6px; overflow: hidden; background: #18191b;
}
.tabstrip { height: 42px; flex: none; display: flex; align-items: center; padding-top: 8px; background: #c4edbc; }
.lights { display: flex; gap: 8px; width: 84px; padding: 0 0 9px 13px; }
.lights i { width: 12px; height: 12px; border-radius: 50%; }
.red { background: #fe4b44; } .amber { background: #fdb900; } .green { background: #05cc2b; }
.tab { height: 34px; display: flex; align-items: center; font-size: 12.200px; color: #1d2a20; white-space: nowrap; }
.title { flex: 1; overflow: hidden; margin-left: 8px; padding-bottom: 2px; letter-spacing: -.15px; }
.first { width: 233px; padding: 0 10px 0 6px; }
.fade { margin-right: 8px; letter-spacing: 0; -webkit-mask: linear-gradient(90deg, #000 88%, transparent); mask: linear-gradient(90deg, #000 88%, transparent); }
.second { width: 239px; padding: 0 10px 0 11px; border-left: 1px solid #83a07c; height: 20px; }
.active { width: 240px; padding: 0 11px 0 13px; background: #fff; border-radius: 8px 8px 0 0; color: #222; position: relative; }
.active .title { margin-left: 9px; }
.active::before, .active::after {
  content: ""; position: absolute; bottom: 0; width: 8px; height: 8px;
}
.active::before { left: -8px; background: radial-gradient(circle at 0 0, transparent 7.500px, #fff 8px); }
.active::after { right: -8px; background: radial-gradient(circle at 100% 0, transparent 7.500px, #fff 8px); }
.plus { margin-left: 16px; }
.caret { margin-left: auto; margin-right: 17px; }

.toolbar {
  height: 37px; flex: none; display: flex; align-items: center; gap: 18px;
  padding-left: 15px; background: #fff; border-bottom: 1px solid #c9c9cc;
}
.omnibox {
  width: 1128px; height: 28px; border-radius: 14px; background: #e0e0e0; margin-left: -4px;
  display: flex; align-items: center; padding: 0 11px; font-size: 14px; white-space: nowrap;
}
.notsecure { color: #c5110b; margin-left: 8px; width: 80px; height: 16px; line-height: 16px; border-right: 1px solid #8f8f8f; letter-spacing: -.2px; }
.url { margin-left: 10px; flex: 1; color: #5f6368; letter-spacing: .08px; padding-bottom: 2px; }
.url s { color: #c5110b; } .url em { font-style: normal; color: #202124; }
.share { margin-right: 19px; }
.exts { display: grid; grid-template-columns: 32px 32px 32px 32px 32px 33px; justify-items: center; align-items: center; margin-left: -12px; }
.bitwarden { position: relative; }
.bitwarden b {
  position: absolute; left: 9px; top: 10px; width: 13px; height: 12px; border-radius: 2px;
  background: #1c4c63; color: #fff; font-size: 10px; line-height: 12px; text-align: center;
}

.pagehead { height: 30px; flex: none; display: flex; }
.brand { width: 260px; background: #2b1677; display: flex; padding-left: 29px; overflow: hidden; }
.words { width: 160px; display: flex; flex-direction: column; margin-top: -18px; }
.name { font: 300 26px/20px Lato, sans-serif; color: #a5a2dd; letter-spacing: .9px; padding-left: 13px; }
.sub { font: 6.500px/9px Lato, sans-serif; color: #aaa2cf; letter-spacing: .8px; padding-left: 36px; margin-top: 3px; }
.bar { flex: 1; display: flex; justify-content: flex-end; gap: 6px; padding-right: 20px; background: linear-gradient(135deg, #361a8e 61%, #0052b4 83%, #0084d0 100%); }
.bar i { width: 44px; height: 12px; border: 1.500px solid #1350a2; border-top: 0; border-radius: 0 0 3px 3px; }
.bar .a { background: radial-gradient(ellipse 9px 1.500px at 50% 0, #dfe6f1 70%, transparent); }
.bar .c { background: radial-gradient(ellipse 5px 1.500px at 50% 0, #dfe6f1 70%, transparent); }

.page { flex: 1; min-height: 0; display: flex; font-family: "Open Sans", sans-serif; }
.sidebar { width: 260px; padding: 12px 20px 0; background: #212526; overflow: hidden; }
.sidebar h6 { font-size: 12px; line-height: 18px; color: #f1f1ee; font-weight: 700; letter-spacing: -.5px; margin-bottom: 6px; }
.sidebar ul { list-style: none; }
.sidebar li {
  height: 36px; display: flex; align-items: center; border: 1px solid transparent; border-radius: 3px;
  font-size: 14px; color: #b5b0a0; padding-left: 8px; letter-spacing: -.55px;
}
.sidebar li span { padding-bottom: 2px; -webkit-text-stroke: .15px currentColor; }
.sidebar li svg { width: 24px; height: 18px; margin: 1px 8px 0 0; color: #5f78a8; fill: currentColor; }
.sidebar .ip { color: #56c95c; font-weight: 600; letter-spacing: -.6px; }
.sidebar hr { margin: 2px 0 7px; border: 0; height: 1px; background: #25292b; }
.mainnav li { margin-bottom: 2px; }
.mainnav i { width: 5px; height: 5px; border: solid #b5b0a0; border-width: 1.200px 1.200px 0 0; transform: rotate(45deg); margin: 1px 14px 0 auto; }
.sidebar .hover { border-color: #43484a; color: #2b9cf0; }
.hover i { border-color: #2b9cf0; }

.content { flex: 1; padding: 18px 30px 0; }
.content h2 { font: 300 22.500px/28px Lato, sans-serif; color: #c9c3b6; letter-spacing: -.7px; }
.content p { font: 300 13px/14px Lato, sans-serif; color: #b5b0a2; letter-spacing: .3px; }
.panel { width: 840px; height: 389px; margin: 28px 0 0 10px; padding: 27px 45px; border: 1px solid #1f3b58; border-radius: 4px; }
.panel h3 { font: 300 14.500px/20px Lato, sans-serif; color: #d8d2c4; }
.tiles { display: grid; grid-template-columns: repeat(3, 236px); grid-auto-rows: 82px; gap: 20px; margin-top: 19px; }
.tiles a { display: flex; align-items: center; padding: 0 0 2px 21px; border-radius: 3px; background: #0064b5; color: #e8e6e3; font-size: 16px; letter-spacing: 0; -webkit-text-stroke: .25px #e8e6e3; }
.tiles svg { width: 30px; height: 23px; margin-right: 6px; color: #e8e6e3; fill: currentColor; }

.tooltip { position: absolute; left: 196px; top: 691px; width: 32px; height: 19px; background: #d7d7d7; color: #111; font-size: 11px; line-height: 19px; text-align: center; box-shadow: 0 2px 5px #0009; }
.status { position: absolute; left: 0; top: 798px; width: 306px; height: 20px; padding-left: 5px; background: #c4edbc; color: #1d2a20; border-radius: 0 3px 0 3px; font-size: 12px; letter-spacing: .14px; line-height: 20px; white-space: nowrap; box-shadow: 0 0 3px #0008; }
.fab { position: absolute; left: 1397px; top: 774px; width: 30px; height: 30px; border-radius: 50%; background: #fff; display: grid; place-items: center; }

.dock { width: 1374px; height: 50px; margin: 10px 0 0 33px; padding: 3px 0 0 1.700px; display: flex; background: #2a2a2a; border-radius: 5px 5px 0 0; }
.app { position: relative; width: 40.970px; height: 47px; flex: none; }
.app > svg { width: 41px; height: 41px; }
.run::after { content: ""; position: absolute; left: 18.500px; top: 41px; width: 4px; height: 4px; border-radius: 50%; background: #aaa; }
.badge { position: absolute; left: 26px; top: 2px; width: 14px; height: 14px; border-radius: 50%; background: #f01818; color: #fff; font-size: 9px; line-height: 14px; text-align: center; font-weight: 400; }
.sep { width: 18px; padding-left: 9px; }
.sep::before { content: ""; display: block; width: 1px; height: 36px; margin-top: 4px; background: #666; }
.cal-m { font: 7px Inter; fill: #fff; text-anchor: middle; }
.cal-d { font: 300 17px Inter; fill: #222; text-anchor: middle; letter-spacing: -1px; }
.m3d { font: 6.500px Inter; fill: #555; text-anchor: middle; }
.term { font: bold 9px "Liberation Mono", monospace; fill: #eee; }
.sky { font: bold 21px Inter; fill: #fff; text-anchor: middle; }
```
